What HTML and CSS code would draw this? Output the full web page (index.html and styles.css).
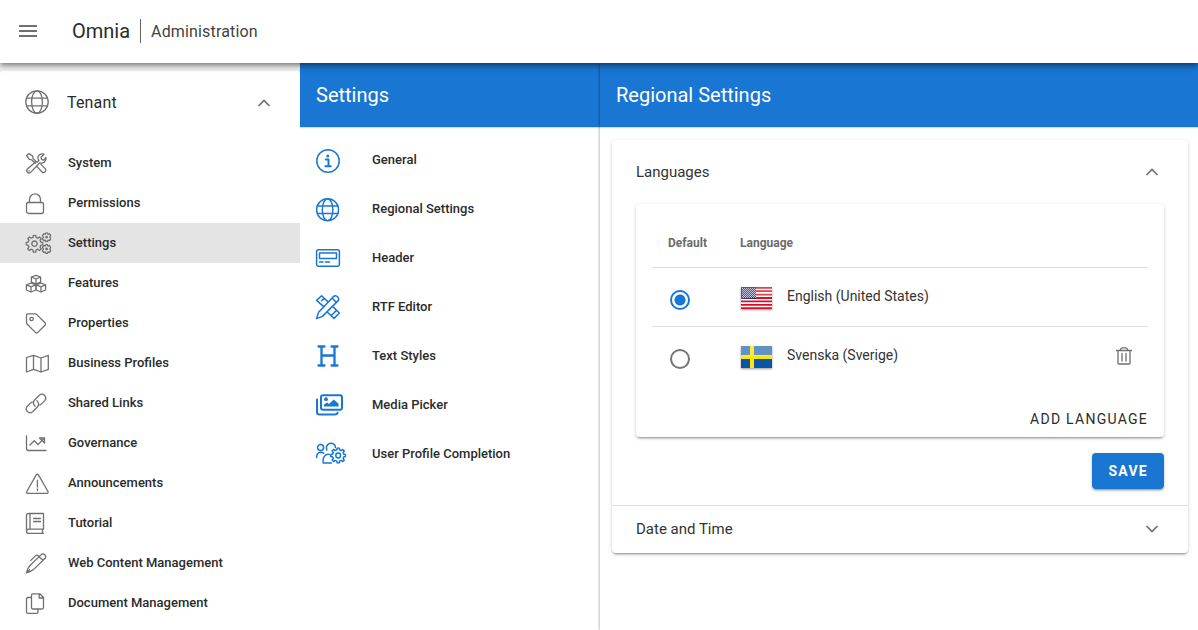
FILE: index.html
```html
<!DOCTYPE html>
<html lang="en">
<head>
<meta charset="utf-8">
<meta name="viewport" content="width=device-width, initial-scale=1">
<title>Omnia Administration</title>
<link rel="stylesheet" href="styles.css">
</head>
<body>
<svg class="defs" aria-hidden="true">
  <symbol id="gear" viewBox="-11 -11 22 22"><path vector-effect="non-scaling-stroke" d="M7.6-1.8 10-1.5V1.5L7.6 1.8 6.6 4.1 8.1 6 6 8.1 4.1 6.6 1.8 7.6 1.5 10H-1.5L-1.8 7.6-4.1 6.6-6 8.1-8.1 6-6.6 4.1-7.6 1.8-10 1.5V-1.5L-7.6-1.8-6.6-4.1-8.1-6-6-8.1-4.1-6.6-1.8-7.6-1.5-10H1.5L1.8-7.6 4.1-6.6 6-8.1 8.1-6 6.6-4.1Z"/><circle vector-effect="non-scaling-stroke" r="3.2"/></symbol>
  <symbol id="small-gear" viewBox="-11 -11 22 22"><path vector-effect="non-scaling-stroke" d="M-3-6.5-2-9.5H2L3-6.5 6.5-7.5 9-3.5 7 0 9 3.5 6.5 7.5 3 6.5 2 9.5H-2L-3 6.5-6.5 7.5-9 3.5-7 0-9-3.5-6.5-7.5Z"/><circle vector-effect="non-scaling-stroke" r="1.6"/></symbol>
  <symbol id="globe" viewBox="0 0 24 24"><circle cx="12" cy="12" r="11.2"/><ellipse cx="12" cy="12" rx="5.4" ry="11.2"/><path d="M1.6 8.2H22.4M1.6 15.8H22.4"/></symbol>
</svg>
<header class="appbar">
  <button class="menu-button" type="button" aria-label="Menu"><svg width="18" height="12" viewBox="0 0 18 12"><path d="M0 1H18M0 6H18M0 11H18"/></svg></button>
  <span class="brand">Omnia</span>
  <span class="section">Administration</span>
</header>
<div class="layout">
  <nav class="sidebar" aria-label="Administration">
    <div class="sidebar-panel">
      <button class="tenant" type="button" aria-expanded="true">
        <svg class="tenant-icon" width="24" height="24"><use href="#globe"/></svg>
        <span>Tenant</span>
        <svg class="chevron" width="14" height="10" viewBox="0 0 14 10"><path d="M1.5 8 7 2.5 12.5 8"/></svg>
      </button>
      <ul class="nav-list">
        <li><a class="nav-item" href="#system"><svg class="nav-icon" viewBox="0 0 28 24"><path d="M1.6 4.6 4 2.6 7.6 5 8 7.4 11.6 11M10.3 12.2 6.7 8.8 4.3 8.4 1.6 4.6M12.4 11 14 9.6Q11.4 5.6 15 3.4 17 2.4 19 3.2L16 6.2 16.6 8.6 19 9 21 6.4Q21.6 9 19.4 11 17.4 12.6 14.8 11.8L5.6 21.4Q4 22.6 2.4 21.4 1 19.6 2.4 18L10.6 11M12 15.6 17 21Q18.6 22.4 20.2 20.8 21.6 19.2 20.2 17.6L16 13.4M4 20H4.2"/></svg>System</a></li>
        <li><a class="nav-item" href="#permissions"><svg class="nav-icon" viewBox="0 0 28 24"><rect x="1.5" y="11.5" width="17" height="11" rx="2"/><path d="M4.5 11.5V8.5A5.5 5.7 0 0 1 15.5 8.5V11.5"/></svg>Permissions</a></li>
        <li><a class="nav-item active" href="#settings" aria-current="page"><svg class="nav-icon" viewBox="0 0 28 24"><use href="#gear" x="0.3" y="3.5" width="18.4" height="18.4"/><use href="#small-gear" x="16.6" y="1.2" width="10" height="10"/><use href="#small-gear" x="16.6" y="13" width="10" height="10"/></svg>Settings</a></li>
        <li><a class="nav-item" href="#features"><svg class="nav-icon" viewBox="0 0 28 24"><path d="M11 4.4 15.6 6V11.2L11 13.2 6.4 11.2V6ZM6.4 6 11 8 15.6 6M11 8V13.2M6 12 10.8 13.8V19L6 21 1.4 19V13.8ZM1.4 13.8 6 15.8 10.8 13.8M6 15.8V21M16 12 20.6 13.8V19L16 21 11.2 19V13.8ZM11.2 13.8 16 15.8 20.6 13.8M16 15.8V21"/></svg>Features</a></li>
        <li><a class="nav-item" href="#properties"><svg class="nav-icon" viewBox="0 0 28 24"><path d="M3 2.8H10.2Q11 2.8 11.6 3.4L20.2 12Q21 13 20.2 14L12.6 21.6Q11.6 22.4 10.6 21.6L2 13Q1.5 12.4 1.5 11.6V4.3Q1.5 2.8 3 2.8Z"/><circle cx="6.6" cy="8" r="1.7"/></svg>Properties</a></li>
        <li><a class="nav-item" href="#profiles"><svg class="nav-icon" viewBox="0 0 28 24"><path d="M1.5 6.5 8.5 4.3 16 7 23.3 4.3V18.4L16 21 8.5 18.4 1.5 21ZM8.5 4.3V18.4M16 7V21"/></svg>Business Profiles</a></li>
        <li><a class="nav-item" href="#links"><svg class="nav-icon" viewBox="0 0 28 24"><path d="M10.2 15.4Q6.8 12 9.8 8.8L14.4 4.2Q17 2 19.6 4.4 22 7 19.8 9.6L16 13.4 14.8 14M11.8 9.6Q15.2 13 12.2 16.2L7.6 20.8Q5 23 2.4 20.6 0 18 2.2 15.4L6 11.6 7.2 11"/></svg>Shared Links</a></li>
        <li><a class="nav-item" href="#governance"><svg class="nav-icon" viewBox="0 0 28 24"><path d="M1.5 5V17.5Q1.5 19.5 3.5 19.5H21M5 14 9.3 9.8 13 13.5 18.6 8M14.5 7H19.5V12Z"/></svg>Governance</a></li>
        <li><a class="nav-item" href="#announcements"><svg class="nav-icon" viewBox="0 0 28 24"><path d="M11.2 3.9Q12.3 2.6 13.4 3.9L23 20.5Q23.4 22.2 22 22.4H2.8Q1.2 22.2 1.8 20.5ZM12.4 9.5V16M12.4 18V19.6"/></svg>Announcements</a></li>
        <li><a class="nav-item" href="#tutorial"><svg class="nav-icon" viewBox="0 0 28 24"><path d="M3.5 2.5H18.5V18.2H3.8Q1.5 18.2 1.5 20.4 1.5 22.4 3.8 22.4H18.5M17.5 18.2V22.4M1.5 20.5V4.5Q1.5 2.5 3.5 2.5M5 2.5V18M8.5 7.5H15.5M8.5 10.5H15.5"/></svg>Tutorial</a></li>
        <li><a class="nav-item" href="#web-content"><svg class="nav-icon" viewBox="0 0 28 24"><path d="M15.4 4.4 17 3Q18.4 2.4 20 4 21.4 5.6 20.4 7L8.4 18.6Q6 20.8 1.4 21.8 2.2 17.4 4.8 14.8ZM14 5.8 18 9.2M5.8 9.4 11 4.4Q12 3.6 13.2 4.8L14 5.6M2 21.4 4.6 18.8"/></svg>Web Content Management</a></li>
        <li><a class="nav-item" href="#documents"><svg class="nav-icon" viewBox="0 0 28 24"><path d="M8 2.8H14.8L18.5 6.5V16.5Q18.5 18 17 18H8Q6.5 18 6.5 16.5V4.3Q6.5 2.8 8 2.8ZM14.2 2.8V7H18.5M6.5 6.5H3Q1.5 6.5 1.5 8V21Q1.5 22.4 3 22.4H11.5Q13 22.4 13 21V18"/></svg>Document Management</a></li>
      </ul>
    </div>
  </nav>
  <section class="settings-column">
    <h2 class="column-title">Settings</h2>
    <ul class="settings-list">
      <li><a class="settings-item" href="#general"><svg class="settings-icon" viewBox="0 0 32 29"><circle cx="13" cy="16" r="11.2"/><circle cx="12.8" cy="11" r="1.5" class="solid"/><path class="bold" d="M10.8 14.5H13.5V21M10.4 21.2H15.8"/></svg>General</a></li>
      <li><a class="settings-item" href="#regional" aria-current="page"><svg class="settings-icon" viewBox="0 0 32 29"><use href="#globe" x="0.8" y="4" width="23.6" height="23.6"/></svg>Regional Settings</a></li>
      <li><a class="settings-item" href="#header"><svg class="settings-icon" viewBox="0 0 32 29"><rect x="1.6" y="6.7" width="22.8" height="16.6" rx="2"/><path d="M4.5 10H21.5V15.5H4.5ZM4.5 19H8M10.5 19H14.5"/></svg>Header</a></li>
      <li><a class="settings-item" href="#rtf"><svg class="settings-icon" viewBox="0 0 32 29"><path d="M8.4 14.4 1.6 8.4 6.6 3.8 12.8 9.6M9 6.4 6.8 8.6M17.8 14.6 24.4 21 19 26.4 12.2 20M21.4 18.4 19.2 20.6M18.4 21.4 16.6 23M17.8 5.2 19.6 3.8Q21 3.2 22.8 5 24.4 6.8 23.4 8.4L7.4 24.4 1.6 26.6 3.4 20.6ZM17 6 21.4 10.4"/></svg>RTF Editor</a></li>
      <li><a class="settings-item" href="#text-styles"><svg class="settings-icon" viewBox="0 0 32 29"><path class="heading-glyph" d="M3.5 5.5H9.5M16.5 5.5H22.5M3.5 24.5H9.5M16.5 24.5H22.5M6.5 5.5V24.5M19.5 5.5V24.5M6.5 14.5H19.5"/></svg>Text Styles</a></li>
      <li><a class="settings-item" href="#media"><svg class="settings-icon" viewBox="0 0 32 29"><rect class="bold" x="6" y="5.2" width="21" height="14.6" rx="2"/><path class="bold" d="M2 9.5V22Q2 24.5 4.5 24.5H20Q22 24.5 22.6 22.8"/><circle cx="11" cy="9.2" r="1.9" class="solid"/><path class="solid" d="M9 16.5V14.8L12 12.5 14 14 18.8 9.5 23.5 13.8V16.5Z"/></svg>Media Picker</a></li>
      <li><a class="settings-item" href="#profile-completion"><svg class="settings-icon" viewBox="0 0 32 29"><circle cx="5.6" cy="8.6" r="3"/><path d="M1.6 18.6Q1.6 13.4 5.6 13.2 7.4 13.2 8.6 14.2M11.8 11Q10.6 7.4 13 5.4 16 3.2 19 5.4 20.4 6.6 20.4 8.4M16.4 24H8.2Q7.4 18.4 10.8 15.8 12.4 14.8 14.2 15.4"/><use href="#gear" x="15" y="8.3" width="16.4" height="16.4"/></svg>User Profile Completion</a></li>
    </ul>
  </section>
  <main class="content">
    <h1 class="column-title">Regional Settings</h1>
    <form class="panels">
      <section class="panel">
        <button class="panel-header tall" type="button" aria-expanded="true">Languages<svg class="chevron" width="14" height="10" viewBox="0 0 14 10"><path d="M1.5 8 7 2.5 12.5 8"/></svg></button>
        <div class="panel-body">
          <div class="language-card">
            <table class="languages">
              <thead><tr><th class="default-col" scope="col">Default</th><th scope="col">Language</th><th class="action-col" aria-label="Actions"></th></tr></thead>
              <tbody>
                <tr>
                  <td class="radio-cell"><input id="lang-en" type="radio" name="default-language" checked></td>
                  <td><label class="language" for="lang-en">
                    <svg class="flag" viewBox="0 0 31 24"><rect y="1" width="31" height="22" class="us-white"/><path class="us-stripes" d="M0 1.8H31M0 5.2H31M0 8.6H31M0 12H31M0 15.4H31M0 18.8H31M0 22.2H31"/><rect y="1" width="15" height="12" class="us-canton"/><path class="us-stars" d="M1 2.5H15M2 3.5H15M1 4.5H15M2 5.5H15M1 6.5H15M2 7.5H15M1 8.5H15M2 9.5H15M1 10.5H15M2 11.5H15"/><path class="gloss" d="M0 1H31V10Q15 10 0 13Z"/></svg>
                    English (United States)</label></td>
                  <td></td>
                </tr>
                <tr>
                  <td class="radio-cell"><input id="lang-sv" type="radio" name="default-language"></td>
                  <td><label class="language" for="lang-sv">
                    <svg class="flag" viewBox="0 0 31 24"><rect y="1" width="31" height="22" class="se-blue"/><path class="gloss" d="M0 1H31V12H0Z"/><path class="se-cross" d="M11 1V23M0 12H31"/><path class="gloss" d="M0 1H31V11Q15 11 0 12Z"/></svg>
                    Svenska (Sverige)</label></td>
                  <td><button class="delete" type="button" aria-label="Delete Svenska (Sverige)"><svg width="16" height="18" viewBox="0 0 16 18"><path d="M.5 3.5H15.5M4.5 3V2.2Q5 .8 6.5 .8H9.5Q11 .8 11.5 2.2V3M2 3.5V16.2Q2 17 3 17H13Q14 17 14 16.2V3.5M6 6.5V14M10 6.5V14"/></svg></button></td>
                </tr>
              </tbody>
            </table>
            <button class="add-language" type="button">Add language</button>
          </div>
          <button class="save" type="submit">Save</button>
        </div>
      </section>
      <section class="panel">
        <button class="panel-header" type="button" aria-expanded="false">Date and Time<svg class="chevron" width="14" height="10" viewBox="0 0 14 10"><path d="M1.5 2 7 7.5 12.5 2"/></svg></button>
      </section>
    </form>
  </main>
</div>
</body>
</html>
```
FILE: styles.css
```css
* {
  box-sizing: border-box;
}

body {
  margin: 0;
  min-height: 100vh;
  display: flex;
  flex-direction: column;
  background: #fff;
  color: #2b2b2b;
  font-family: Roboto, "Liberation Sans", sans-serif;
  font-size: 14px;
}

button {
  border: 0;
  padding: 0;
  background: none;
  color: inherit;
  font: inherit;
  cursor: pointer;
}

a {
  color: inherit;
  text-decoration: none;
}

ul {
  list-style: none;
  margin: 0;
  padding: 0;
}

svg {
  flex: none;
  fill: none;
  stroke: #707070;
  stroke-width: 1.3;
  stroke-linejoin: round;
  stroke-linecap: round;
}

.defs {
  position: absolute;
  width: 0;
  height: 0;
}

.chevron {
  stroke-width: 1.7;
  stroke-linecap: butt;
  stroke-linejoin: miter;
}

.appbar {
  position: relative;
  z-index: 2;
  display: flex;
  align-items: center;
  height: 63px;
  padding: 0 0 2px 19px;
  background: #fff;
  box-shadow: 0 2px 4px -1px rgba(0, 0, 0, .3), 0 4px 5px rgba(0, 0, 0, .2), 0 1px 10px rgba(0, 0, 0, .15);
}

.menu-button {
  display: flex;
  margin-right: 35px;
}

.menu-button svg {
  stroke-width: 2;
  stroke-linecap: butt;
}

.brand {
  padding-right: 10px;
  font-size: 20px;
  line-height: 24px;
}

.section {
  border-left: 1px solid #616161;
  padding: 2px 0 0 10px;
  color: #424242;
  font-size: 16px;
  line-height: 22px;
  letter-spacing: .0094em;
}

.layout {
  flex: 1;
  display: grid;
  grid-template-columns: 300px 300px 1fr;
}

.sidebar {
  padding-top: 8px;
  background: #f0f0f0;
}

.sidebar-panel {
  height: 100%;
  border-radius: 4px 4px 0 0;
  background: #fff;
}

.tenant {
  display: flex;
  align-items: center;
  width: 100%;
  height: 64px;
  padding: 0 29px 2px 25px;
  font-size: 16px;
  letter-spacing: .0094em;
  text-align: left;
}

.tenant span {
  flex: 1;
  padding-left: 18px;
}

.tenant .chevron {
  margin-top: 2px;
}

.nav-list {
  padding-top: 8px;
}

.nav-item,
.settings-item {
  display: flex;
  align-items: center;
  font-size: 13px;
  font-weight: 500;
}

.nav-item {
  gap: 15px;
  height: 40px;
  padding: 0 0 2px 25px;
}

.nav-item.active {
  background: #e4e4e4;
}

.nav-icon {
  width: 28px;
  height: 24px;
  margin-top: 2px;
}

.settings-column {
  min-width: 0;
}

.column-title {
  height: 64px;
  margin: 0;
  padding: 0 16px;
  background: #1976d2;
  color: #fff;
  font-size: 20px;
  font-weight: 400;
  line-height: 64px;
  box-shadow: 0 1px 1px rgba(0, 0, 0, .15);
}

.settings-list {
  padding-top: 8px;
}

.settings-item {
  gap: 25px;
  height: 49px;
  padding-left: 15px;
}

.settings-icon {
  width: 32px;
  height: 29px;
  stroke: #1976d2;
  stroke-width: 1.5;
}

.settings-icon .bold {
  stroke-width: 2;
}

.settings-icon .heading-glyph {
  stroke-width: 2.3;
}

.settings-icon .solid {
  fill: #1976d2;
  stroke: none;
}

.content {
  position: relative;
  z-index: 1;
  min-width: 0;
  background: #fff;
  box-shadow: -1px 0 2px rgba(0, 0, 0, .25);
}

.panels {
  margin: 13px 10px 16px 12px;
  border-radius: 4px;
  background: #fff;
  box-shadow: 0 3px 1px -2px rgba(0, 0, 0, .2), 0 2px 2px rgba(0, 0, 0, .14), 0 1px 5px rgba(0, 0, 0, .12);
}

.panel + .panel {
  border-top: 1px solid #dedede;
}

.panel-header {
  display: flex;
  align-items: center;
  justify-content: space-between;
  width: 100%;
  height: 47px;
  padding: 0 29px 2px 24px;
  color: #333;
  font-size: 15px;
  text-align: left;
}

.panel-header.tall {
  height: 64px;
  padding-bottom: 0;
}

.panel-body {
  display: flex;
  flex-direction: column;
  align-items: flex-end;
  gap: 16px;
  padding: 0 24px 16px;
}

.language-card {
  display: flex;
  flex-direction: column;
  align-items: flex-end;
  gap: 16px;
  width: 100%;
  padding: 15px 16px 0;
  border-radius: 4px;
  box-shadow: 0 3px 1px -2px rgba(0, 0, 0, .2), 0 2px 2px rgba(0, 0, 0, .14), 0 1px 5px rgba(0, 0, 0, .12);
}

.languages {
  width: 100%;
  border-collapse: separate;
  border-spacing: 0;
  text-align: left;
}

.languages th,
.languages td {
  padding: 0 16px;
}

.languages th {
  height: 49px;
  border-bottom: 1px solid #dedede;
  color: #6b6b6b;
  font-size: 12px;
  font-weight: 700;
}

.languages td {
  height: 58px;
}

.languages tbody tr:first-child td {
  height: 59px;
  border-bottom: 1px solid #dedede;
}

.default-col {
  width: 72px;
}

.action-col {
  width: 48px;
}

.languages .radio-cell {
  padding: 6px 16px 0 18px;
}

.radio-cell input {
  appearance: none;
  display: block;
  width: 20px;
  height: 20px;
  margin: 0;
  border: 2px solid #757575;
  border-radius: 50%;
}

.radio-cell input:checked {
  border-color: #1976d2;
  background: radial-gradient(circle, #1976d2 5px, transparent 6px);
}

.language {
  display: flex;
  align-items: center;
  gap: 15px;
  padding-bottom: 2px;
  color: #333;
}

.flag {
  width: 31px;
  height: 24px;
  margin: 4px 0 0 1px;
  stroke-linecap: butt;
  filter: drop-shadow(0 1px 1px rgba(0, 0, 0, .4));
}

.us-white {
  fill: #fff;
  stroke: none;
}

.us-stripes {
  stroke: #d80f24;
  stroke-width: 1.8;
}

.us-canton {
  fill: #292c73;
  stroke: none;
}

.us-stars {
  stroke: rgba(255, 255, 255, .65);
  stroke-width: 1;
  stroke-dasharray: 1 1;
}

.se-blue {
  fill: #0a54a5;
  stroke: none;
}

.se-cross {
  stroke: #ffe600;
  stroke-width: 4;
}

.gloss {
  fill: rgba(255, 255, 255, .2);
  stroke: none;
}

.delete {
  display: flex;
}

.add-language,
.save {
  height: 36px;
  letter-spacing: .09em;
  text-transform: uppercase;
}

.save {
  padding: 0 16px;
  border-radius: 4px;
  background: #1976d2;
  color: #fff;
  font-weight: 700;
  box-shadow: 0 3px 1px -2px rgba(0, 0, 0, .2), 0 2px 2px rgba(0, 0, 0, .14), 0 1px 5px rgba(0, 0, 0, .12);
}
```
